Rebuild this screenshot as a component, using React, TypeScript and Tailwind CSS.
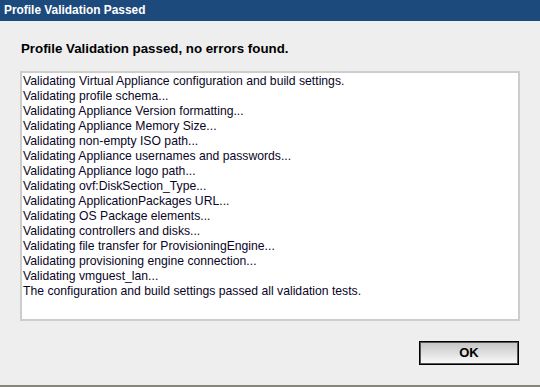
const lines = [
  "Validating Virtual Appliance configuration and build settings.",
  "Validating profile schema...",
  "Validating Appliance Version formatting...",
  "Validating Appliance Memory Size...",
  "Validating non-empty ISO path...",
  "Validating Appliance usernames and passwords...",
  "Validating Appliance logo path...",
  "Validating ovf:DiskSection_Type...",
  "Validating ApplicationPackages URL...",
  "Validating OS Package elements...",
  "Validating controllers and disks...",
  "Validating file transfer for ProvisioningEngine...",
  "Validating provisioning engine connection...",
  "Validating vmguest_lan...",
  "The configuration and build settings passed all validation tests.",
];

export default function App() {
  return (
    <div className="w-[540px] h-[387px] flex flex-col bg-[#eeeeee] font-['Liberation_Sans',Arial,sans-serif] overflow-hidden">
      {/* title bar */}
      <div className="h-[21px] shrink-0 bg-[#1d4a7c] text-white font-bold text-[11.9px] leading-[21px] pl-[4px]">
        Profile Validation Passed
      </div>

      {/* body */}
      <div className="flex-1 flex flex-col px-[20px]">
        <p className="mt-[20px] pl-[1px] font-bold text-[13.3px] leading-[15px] text-black">
          Profile Validation passed, no errors found.
        </p>

        <div className="mt-[15px] w-[500px] h-[250px] bg-white border-2 border-[#cdcdcd] pt-[1px] pl-[1px] text-[12.2px] leading-[15px] text-[#0a0526]">
          {lines.map((l, i) => (
            <div key={i}>{l}</div>
          ))}
        </div>

        <div className="flex justify-end mt-[20px] pr-[1px]">
          <button className="w-[100px] h-[24px] border border-black shadow-[inset_0_0_0_1px_#555] bg-gradient-to-b from-[#c4c4c4] to-[#fbfbfb] text-[13px] font-bold text-black">
            OK
          </button>
        </div>
      </div>

      {/* bottom edge */}
      <div className="h-[2px] shrink-0 bg-[#85857a]" />
    </div>
  );
}
